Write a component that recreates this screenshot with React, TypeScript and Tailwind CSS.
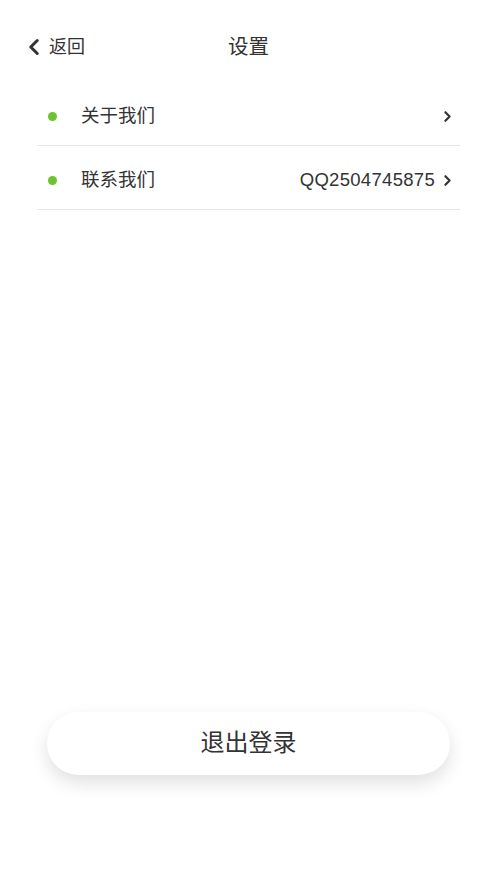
import { ChevronLeft, ChevronRight } from "lucide-react";

const rows = [
  { label: "关于我们", value: "" },
  { label: "联系我们", value: "QQ2504745875" },
];

export default function App() {
  return (
    <div
      className="min-h-[883px] w-full bg-white text-[#333]"
      style={{ fontFamily: '"Liberation Sans", "Noto Sans CJK SC", sans-serif' }}
    >
      {/* Header */}
      <div className="relative flex h-[82px] items-start justify-center pt-[34px]">
        <div className="absolute left-[21px] top-[34px] flex h-[26px] items-center">
          <ChevronLeft className="h-[26px] w-[26px] text-[#333]" strokeWidth={2.8} />
          <span className="ml-[2px] text-[18px] leading-[26px]">返回</span>
        </div>
        <h1 className="text-[20.5px] leading-[26px] font-normal">设置</h1>
      </div>

      {/* List */}
      <div className="px-[37px]">
        {rows.map((r) => (
          <div
            key={r.label}
            className="flex h-[64px] items-center border-b border-[#e8e8e8] pt-[5px]"
          >
            <div className="ml-[11px] h-[9px] w-[9px] rounded-full bg-[#6cc431]" />
            <span className="ml-[24px] text-[18.5px] leading-none">{r.label}</span>
            <span className="ml-auto text-[18.5px] leading-none tracking-[0.3px] text-[#333]">
              {r.value}
            </span>
            <ChevronRight className="ml-[4px] mr-[4px] h-[17px] w-[17px] text-[#333]" strokeWidth={3} />
          </div>
        ))}
      </div>

      {/* Logout */}
      <div className="mt-[502px] px-[47px]">
        <button className="flex h-[63px] w-full items-center justify-center rounded-full bg-white pb-[2px] text-[24px] text-[#333] shadow-[0_8px_18px_rgba(0,0,0,0.12)]">
          退出登录
        </button>
      </div>
    </div>
  );
}
